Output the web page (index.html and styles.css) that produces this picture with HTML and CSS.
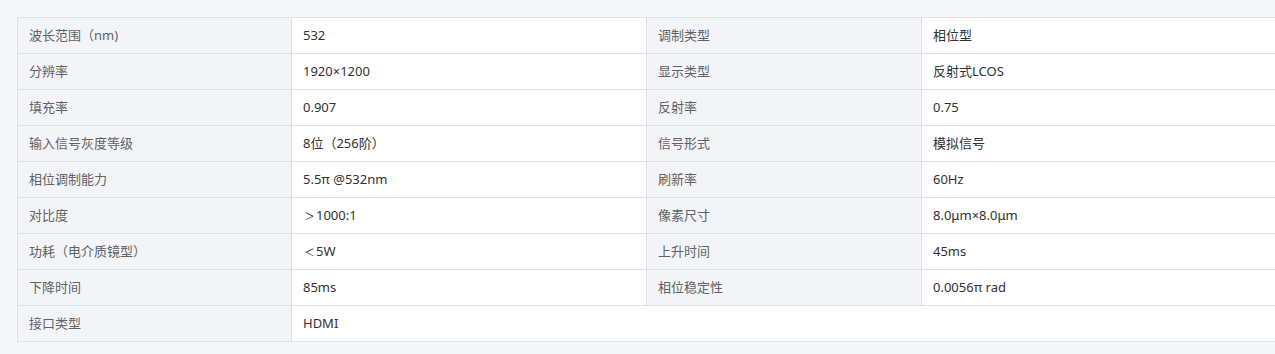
FILE: index.html
```html
<!DOCTYPE html>
<html lang="zh-CN">
<head>
<meta charset="utf-8">
<title>参数</title>
<link rel="stylesheet" href="styles.css">
</head>
<body>
<div class="page">
  <table class="spec">
    <colgroup>
      <col class="c-label1">
      <col class="c-value1">
      <col class="c-label2">
      <col class="c-value2">
    </colgroup>
    <tbody>
      <tr><td class="label">波长范围（nm)</td><td class="value">532</td><td class="label">调制类型</td><td class="value">相位型</td></tr>
      <tr><td class="label">分辨率</td><td class="value">1920×1200</td><td class="label">显示类型</td><td class="value">反射式LCOS</td></tr>
      <tr><td class="label">填充率</td><td class="value">0.907</td><td class="label">反射率</td><td class="value">0.75</td></tr>
      <tr><td class="label">输入信号灰度等级</td><td class="value">8位（256阶）</td><td class="label">信号形式</td><td class="value">模拟信号</td></tr>
      <tr><td class="label">相位调制能力</td><td class="value">5.5π @532nm</td><td class="label">刷新率</td><td class="value">60Hz</td></tr>
      <tr><td class="label">对比度</td><td class="value"><span class="cmp">＞</span>1000:1</td><td class="label">像素尺寸</td><td class="value">8.0μm×8.0μm</td></tr>
      <tr><td class="label">功耗（电介质镜型）</td><td class="value"><span class="cmp">＜</span>5W</td><td class="label">上升时间</td><td class="value">45ms</td></tr>
      <tr><td class="label">下降时间</td><td class="value">85ms</td><td class="label">相位稳定性</td><td class="value">0.0056π rad</td></tr>
      <tr><td class="label">接口类型</td><td class="value" colspan="3">HDMI</td></tr>
    </tbody>
  </table>
</div>
</body>
</html>
```
FILE: styles.css
```css
html, body {
  margin: 0;
  padding: 0;
  overflow: hidden;
  background: #f6f7f9;
}

.page {
  padding: 17px 0 0 17px;
  width: 1300px;
}

.spec {
  border-collapse: collapse;
  table-layout: fixed;
  width: 1260px;
  font-family: "Noto Sans", "Noto Sans CJK SC", sans-serif;
  font-size: 13px;
  background: #ffffff;
}

.c-label1 { width: 274px; }
.c-value1 { width: 355px; }
.c-label2 { width: 275px; }
.c-value2 { width: 356px; }

.spec td {
  border: 1px solid #dfe1e5;
  padding: 8px 11px;
  line-height: 19px;
  white-space: nowrap;
  text-align: left;
  vertical-align: middle;
}

.spec .label {
  background: #f3f4f7;
  color: #606266;
}

.spec .value {
  background: #ffffff;
  color: #303133;
}

.cmp {
  display: inline-block;
  width: 13px;
  font-size: 10px;
  line-height: 1;
  text-align: center;
  vertical-align: baseline;
}
```
